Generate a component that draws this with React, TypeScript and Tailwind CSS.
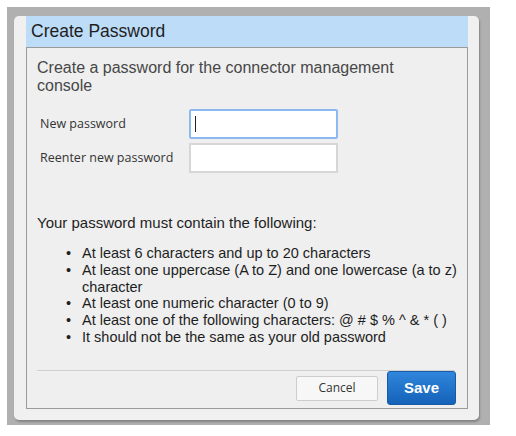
import React from 'react';

const rules = [
  'At least 6 characters and up to 20 characters',
  'At least one uppercase (A to Z) and one lowercase (a to z) character',
  'At least one numeric character (0 to 9)',
  'At least one of the following characters: @ # $ % ^ & * ( )',
  'It should not be the same as your old password',
];

export default function App() {
  return (
    <div className="w-[516px] h-[436px] bg-white pt-[7px] pl-[7px] font-['Liberation_Sans',Arial,sans-serif]">
      <div className="w-[483px] h-[418px] bg-[#b0b0b0] pt-[9px] pl-[7px]">
        <div className="w-[465px] h-[404px] bg-[#f0f0f0] rounded-[5px] shadow-[1px_2px_2px_rgba(0,0,0,0.25)] pl-[12px] pr-[11px]">
          {/* Title bar */}
          <div className="h-[31px] bg-[#bddcf8] flex items-center pl-[5px] text-[17.5px] text-[#1e1e1e]">
            Create Password
          </div>

          {/* Body */}
          <div className="h-[362px] border border-[#9a9a9a] bg-[#efefef] pl-[10px] pr-[12px] flex flex-col">
            <p className="mt-[11px] text-[16px] leading-[18px] text-[#474747] pr-[40px]">
              Create a password for the connector management console
            </p>

            <div className="mt-[14px] flex flex-col gap-[4px] pl-[3px] font-['Open_Sans',sans-serif] text-[12.5px] text-[#333]">
              <div className="flex items-center h-[30px]">
                <label className="w-[149px]">New password</label>
                <div className="w-[149px] h-[30px] bg-white border-2 border-[#8cbaf0] rounded-[2px] flex items-center pl-[4px]">
                  <span className="w-px h-[16px] bg-[#222]" />
                </div>
              </div>
              <div className="flex items-center h-[30px]">
                <label className="w-[149px]">Reenter new password</label>
                <div className="w-[149px] h-[30px] bg-white border-2 border-[#d6d6d6]" />
              </div>
            </div>

            <p className="mt-[41px] text-[15px] leading-[17px] text-[#1e1e1e]">
              Your password must contain the following:
            </p>

            <ul className="mt-[14px] ml-[29px] -mr-[8px] text-[14.5px] leading-[16.8px] text-[#1e1e1e]">
              {rules.map((r) => (
                <li key={r} className="flex">
                  <span className="w-[16px] shrink-0">•</span>
                  <span>{r}</span>
                </li>
              ))}
            </ul>

            <div className="mt-auto border-t border-[#cfcfcf]" />
            <div className="flex justify-end items-center gap-[9px] pb-[3px] -mr-[1px]">
              <button className="w-[82px] h-[25px] bg-[#f7f7f7] border border-[#cdcdcd] rounded-[2px] font-['Open_Sans',sans-serif] text-[12px] text-[#333]">
                Cancel
              </button>
              <button className="w-[69px] h-[34px] rounded-[3px] bg-gradient-to-b from-[#2f86dc] to-[#1562b9] border border-[#1a5aa5] text-white font-bold text-[15px]">
                Save
              </button>
            </div>
          </div>
        </div>
      </div>
    </div>
  );
}
